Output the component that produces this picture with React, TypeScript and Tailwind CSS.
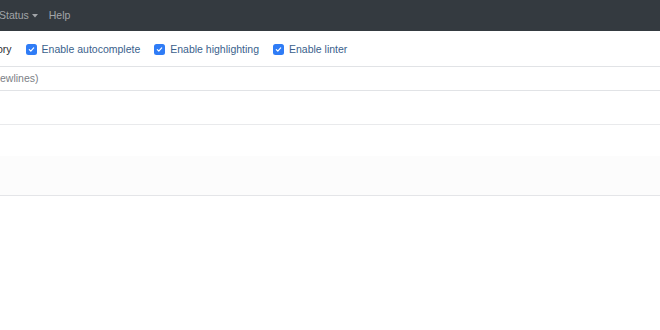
import React from "react";

function Check() {
  return (
    <span className="flex h-[11px] w-[11px] shrink-0 items-center justify-center rounded-[2.5px] bg-[#2f7cf6]">
      <svg width="7" height="7" viewBox="0 0 8 8" fill="none">
        <path d="M1.5 4.2 L3.2 5.8 L6.5 2.2" stroke="#fff" strokeWidth="1.4" strokeLinecap="round" strokeLinejoin="round" />
      </svg>
    </span>
  );
}

function Opt({ label }: { label: string }) {
  return (
    <label className="flex items-center gap-[5px]">
      <Check />
      <span className="text-[#3a5f8c]">{label}</span>
    </label>
  );
}

export default function App() {
  return (
    <div
      className="h-[330px] w-[660px] overflow-hidden bg-white text-[10.5px]"
      style={{ fontFamily: '"Liberation Sans", Arial, sans-serif' }}
    >
      <div className="flex h-[31px] items-center bg-[#343a40] text-[#a2a5a9]">
        <div className="-ml-px flex items-center gap-[3px]">
          <span>Status</span>
          <svg width="6" height="4" viewBox="0 0 6 4">
            <path d="M0 0 L6 0 L3 3.5 Z" fill="#a2a5a9" />
          </svg>
        </div>
        <span className="ml-[11px]">Help</span>
      </div>
      <div className="flex h-[36px] items-center gap-[14px] border-b border-[#e1e3e6] pt-[2px]">
        <span className="-ml-[3px] text-[#2a2e33]">ory</span>
        <Opt label="Enable autocomplete" />
        <Opt label="Enable highlighting" />
        <Opt label="Enable linter" />
      </div>
      <div className="flex h-[24px] items-center border-b border-[#e1e3e6] text-[#7b8085]">
        <span>ewlines)</span>
      </div>
      <div className="h-[34px] border-b border-[#e9eaec]" />
      <div className="flex h-[71px] flex-col border-b border-[#e4e5e8]">
        <div className="h-[31px]" />
        <div className="flex-1 bg-[#fcfcfc]" />
      </div>
    </div>
  );
}
